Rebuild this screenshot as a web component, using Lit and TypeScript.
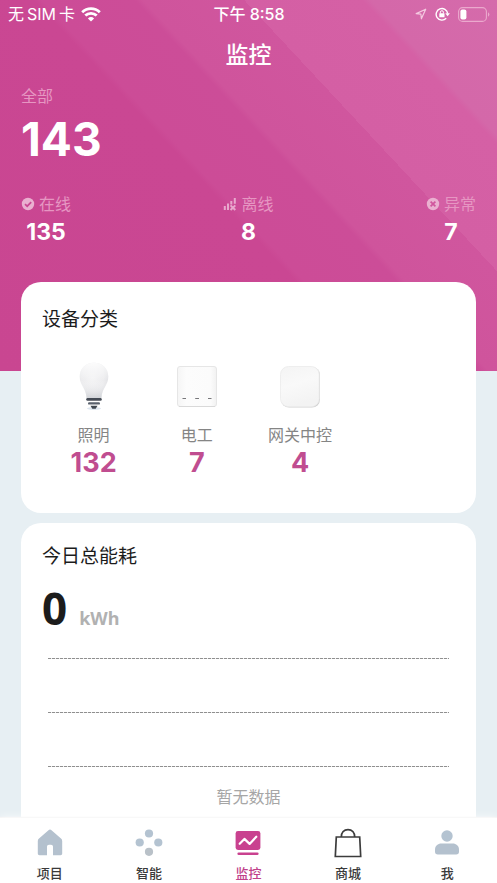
import { LitElement, html, css, svg } from "lit";
import { customElement, state } from "lit/decorators.js";
import { classMap } from "lit/directives/class-map.js";

const wifiIcon = svg`<svg class="wifi" viewBox="0 0 20 15" aria-hidden="true">
  <g fill="none" stroke="#fff" stroke-width="2.8"><path d="M1.2 5.2a12.6 12.6 0 0 1 17.6 0"/><path d="M4.3 8.6a8.2 8.2 0 0 1 11.4 0"/></g>
  <path fill="#fff" d="M10 14.6 6.9 11.4a4.5 4.5 0 0 1 6.2 0z"/></svg>`;
const locationIcon = svg`<svg width="12" height="12" viewBox="0 0 12 12" aria-hidden="true">
  <path d="M10.7 1.2 6.4 10.8 5.9 6.2 1.2 5.6z" fill="none" stroke="#f4c9e0" stroke-width="1.2" stroke-linejoin="round"/></svg>`;
const lockIcon = svg`<svg width="15" height="14" viewBox="0 0 15 14" aria-hidden="true">
  <path d="M11.2 11.3A5.8 5.8 0 1 1 12.7 6.5" fill="none" stroke="#fff" stroke-width="1.4"/>
  <path d="M10.3 6.2h4.6l-2.3 3.1z" fill="#fff"/><rect x="4.3" y="6.2" width="5.2" height="4.1" rx=".6" fill="#fff"/>
  <path d="M5.4 6.4V5.2a1.5 1.5 0 0 1 3 0v1.2" fill="none" stroke="#fff" stroke-width="1"/></svg>`;
const batteryIcon = svg`<svg width="32" height="15" viewBox="0 0 32 15" aria-hidden="true">
  <rect x=".6" y=".6" width="27.8" height="13.8" rx="4" fill="none" stroke="#eba9cd" stroke-width="1.1"/>
  <rect x="2.4" y="2.4" width="6" height="10.2" rx="2" fill="#fff"/><path d="M30 5.2a2.6 2.6 0 0 1 0 4.6z" fill="#eba9cd"/></svg>`;

const onlineIcon = svg`<svg width="14" height="14" viewBox="0 0 14 14" aria-hidden="true">
  <circle cx="7" cy="7" r="6.2" fill="#eab0d0"/><path d="m4 7.1 2.2 2.1 4-4.1" fill="none" stroke="#ca4793" stroke-width="1.7"/></svg>`;
const offlineIcon = svg`<svg width="14" height="14" viewBox="0 0 14 14" aria-hidden="true">
  <path d="M1.800 9v4M5 6.400V13M8.300 4v3.400M11.800 1v5.800" fill="none" stroke="#e8a8cd" stroke-width="2"/>
  <path d="m7.500 8.400 4.800 4.600m0-4.600L7.500 13" fill="none" stroke="#e8a8cd" stroke-width="2"/></svg>`;
const faultIcon = svg`<svg width="14" height="14" viewBox="0 0 14 14" aria-hidden="true">
  <circle cx="7" cy="7" r="6.2" fill="#eab0d0"/><path d="m4.6 4.6 4.8 4.8m0-4.800L4.600 9.400" fill="none" stroke="#d0569d" stroke-width="1.7"/></svg>`;

const bulbIcon = svg`<svg width="48" height="48" viewBox="0 0 48 48" aria-hidden="true">
  <defs>
    <radialGradient id="glass" cx=".45" cy=".45" r=".6"><stop offset="0" stop-color="#f4f4f5"/><stop offset=".65" stop-color="#ececee"/><stop offset="1" stop-color="#dfe0e3"/></radialGradient>
    <linearGradient id="fade" x2="0" y2="1"><stop offset="0" stop-color="#fff" stop-opacity=".85"/><stop offset=".5" stop-color="#fff" stop-opacity="0"/><stop offset="1" stop-color="#c9ccd1" stop-opacity=".6"/></linearGradient>
  </defs>
  <path d="M24 .8c8.300 0 14.300 6 14.300 13.700 0 9.300-6.300 11-6.900 21.500H16.600C16 25.500 9.700 23.800 9.700 14.500 9.700 6.800 15.700.8 24 .8z" fill="url(#glass)"/>
  <path d="M24 .8c8.300 0 14.300 6 14.300 13.700 0 9.300-6.300 11-6.900 21.500H16.600C16 25.500 9.700 23.800 9.700 14.500 9.700 6.800 15.700.8 24 .8z" fill="url(#fade)"/>
  <ellipse cx="24" cy="46.500" rx="7" ry="1.400" fill="#dde6ef"/>
  <rect x="16.200" y="36" width="15.600" height="2.800" rx="1.400" fill="#454b55"/>
  <rect x="18" y="40.200" width="12" height="2.400" rx="1.200" fill="#59616d"/>
  <path d="M20.500 43.800h7l-1.800 3h-3.400z" fill="#3f4751"/></svg>`;
const switchIcon = svg`<svg width="48" height="48" viewBox="0 0 48 48" aria-hidden="true">
  <defs><linearGradient id="panel"><stop offset="0" stop-color="#f5f5f5"/><stop offset=".22" stop-color="#fcfcfc"/><stop offset=".85" stop-color="#fbfbfb"/><stop offset="1" stop-color="#f1f1f1"/></linearGradient></defs>
  <rect x="4.500" y="4.500" width="39" height="40" rx="2.500" fill="url(#panel)" stroke="#e6e6e6"/>
  <path d="M6 44.500h36" stroke="#d9d9d9"/>
  <path d="M9.500 36.500h3.500M22.200 36.500h3.800M35 36.500h3.500" stroke="#77777a" stroke-width="1.200"/></svg>`;
const gatewayIcon = svg`<svg width="48" height="48" viewBox="0 0 48 48" aria-hidden="true">
  <defs><linearGradient id="shell" x2=".3" y2="1"><stop offset="0" stop-color="#f4f4f4"/><stop offset=".5" stop-color="#f9f9f9"/><stop offset="1" stop-color="#f3f3f3"/></linearGradient></defs>
  <rect x="5" y="5" width="39" height="40.600" rx="8" fill="#d2d2d2"/>
  <rect x="4.500" y="4.500" width="38.700" height="40.200" rx="8" fill="url(#shell)" stroke="#ebebeb" stroke-width=".8"/></svg>`;

const homeIcon = svg`<svg width="28" height="28" viewBox="0 0 28 28" aria-hidden="true">
  <path d="M14 1.500c.6 0 1 .3 1.500.7l9.500 8.400c.8.700 1.200 1.400 1.200 2.400v12.500c0 1-.7 1.700-1.700 1.700H17v-8.400c0-1.300-.8-2-2-2h-2c-1.200 0-2 .7-2 2v8.400H3.500c-1 0-1.700-.7-1.700-1.700V13c0-1 .4-1.700 1.200-2.400l9.500-8.400c.5-.4.900-.7 1.500-.7z" fill="#b4c1ce"/></svg>`;
const smartIcon = svg`<svg width="28" height="28" viewBox="0 0 28 28" aria-hidden="true">
  <g fill="#b4c3d1"><circle cx="14" cy="5.500" r="4.100"/><circle cx="4.700" cy="14.500" r="4.100"/><circle cx="23.300" cy="14.500" r="4.100"/></g><circle cx="14" cy="23.800" r="4.100" fill="#b9c1c8"/></svg>`;
const monitorIcon = svg`<svg width="28" height="28" viewBox="0 0 28 28" aria-hidden="true">
  <rect x="1.600" y="3" width="24.800" height="19" rx="2.400" fill="#c9418f"/><rect x="3.400" y="24.400" width="21.200" height="2.600" rx="1.300" fill="#c9418f"/>
  <path d="m5.700 15.800 4.700-4.900 5.200 5 6.700-7.200" fill="none" stroke="#fff" stroke-width="2.200" stroke-linecap="round" stroke-linejoin="round"/></svg>`;
const shopIcon = svg`<svg width="28" height="30" viewBox="0 0 28 30" aria-hidden="true">
  <path d="M2.300 9h23.400l1 19.500H1.300z" fill="none" stroke="#3c3c3c" stroke-width="1.700"/>
  <path d="M7.300 9c0-4.300 2.700-7.400 6.700-7.400s6.700 3.100 6.700 7.400" fill="none" stroke="#3c3c3c" stroke-width="1.700"/></svg>`;
const meIcon = svg`<svg width="28" height="28" viewBox="0 0 28 28" aria-hidden="true">
  <circle cx="14" cy="8" r="5.700" fill="#b4c3d1"/><path d="M2 21.500c0-3.600 2.800-6 6.400-6h11.200c3.600 0 6.400 2.400 6.400 6v2.200c0 1.800-1 2.800-2.800 2.800H4.800C3 26.500 2 25.500 2 23.700z" fill="#b4c1ce"/></svg>`;

const stats = [
  { icon: onlineIcon, label: "在线", value: 135 },
  { icon: offlineIcon, label: "离线", value: 8 },
  { icon: faultIcon, label: "异常", value: 7 },
];
const categories = [
  { icon: bulbIcon, label: "照明", value: 132 },
  { icon: switchIcon, label: "电工", value: 7 },
  { icon: gatewayIcon, label: "网关中控", value: 4 },
];
const tabs = [
  { icon: homeIcon, label: "项目" },
  { icon: smartIcon, label: "智能" },
  { icon: monitorIcon, label: "监控" },
  { icon: shopIcon, label: "商城" },
  { icon: meIcon, label: "我" },
];

@customElement("app-root")
export class AppRoot extends LitElement {
  @state() private active = "监控";

  static styles = css`
    :host {
      display: flex;
      flex-direction: column;
      height: 100vh;
      background: #e7eff3;
      color: #1c1c1c;
      font-family: Inter, "Noto Sans CJK SC", sans-serif;
      font-size: 16px;
      line-height: 20px;
    }
    * { box-sizing: border-box; }
    h1, h2, p, dl, dd { margin: 0; padding: 0; }
    svg { display: block; flex: none; }
    .scroll { flex: 1; min-height: 0; overflow-y: auto; scrollbar-width: none; }
    .hero {
      padding: 0 21px 125px;
      color: #fff;
      background: linear-gradient(47deg,
        #c94691 0, #ca4793 45%, #cc4c97 46%, #cc4d98 57%,
        #cf549c 58%, #d0569e 70%, #d45fa4 70%, #d560a5 84%, #d468a9 85%, #d56bab 100%);
    }
    .status {
      display: grid;
      grid-template-columns: 1fr auto 1fr;
      align-items: center;
      height: 28px;
      margin: 0 -14px 0 -13px;
    }
    .carrier { display: flex; align-items: center; gap: 6px; }
    .words { display: flex; gap: 3px; }
    .wifi { width: 20px; height: 15px; }
    .clock { font-weight: 500; }
    .indicators { display: flex; align-items: center; justify-content: flex-end; gap: 8px; }
    h1 { margin-top: 11px; text-align: center; font-size: 23px; line-height: 32px; font-weight: 500; }
    .soft { color: #e696c2; }
    .total-label { margin-top: 15px; }
    .total { margin-top: 9px; font-size: 46px; line-height: 48px; font-weight: 700; }
    .stats { display: flex; justify-content: space-between; margin-top: 31px; }
    .stat { display: flex; flex-direction: column; align-items: center; gap: 4px; }
    .stat dt { display: flex; align-items: center; gap: 4px; }
    .stat dd { font-size: 23px; line-height: 28px; font-weight: 700; }
    .cards { display: flex; flex-direction: column; gap: 10px; margin-top: -89px; padding: 0 21px; }
    .card { background: #fff; border-radius: 20px; padding: 26px 21px 36px; }
    .energy { padding-top: 22px; }
    h2 { font-size: 19px; line-height: 24px; font-weight: 400; }
    .categories { display: grid; grid-template-columns: repeat(4, 1fr); margin-top: 30px; }
    .category { display: flex; flex-direction: column; align-items: center; }
    .category dt { display: flex; flex-direction: column; align-items: center; gap: 15px; color: #858585; }
    .category dd { margin-top: 4px; font-size: 27px; line-height: 28px; font-weight: 700; color: #c04d90; }
    .usage { display: flex; align-items: baseline; gap: 12px; margin-top: 15px; font-family: "Noto Sans", sans-serif; font-weight: 700; }
    .usage-value { font-size: 44px; line-height: 48px; }
    .usage-unit { font-size: 18px; color: #b1b1b1; }
    .chart { display: flex; flex-direction: column; gap: 53px; margin: 26px 6px 0; }
    .gridline { height: 1px; background: repeating-linear-gradient(90deg, #8f8f8f 0 3px, #f0f0f0 3px 4px); }
    .empty { margin-top: 20px; text-align: center; color: #a6a6a6; }
    .tabs {
      display: grid;
      grid-template-columns: repeat(5, 1fr);
      height: 65px;
      background: #fff;
      box-shadow: 0 -1px 8px rgba(255, 255, 255, 0.7), 0 -1px 1px #f4f4f4;
      position: relative;
    }
    .tab {
      display: flex;
      flex-direction: column;
      align-items: center;
      justify-content: space-between;
      padding: 10px 0 2px;
      color: #3a3a3a;
      font-size: 13px;
      line-height: 16px;
      font-weight: 500;
      text-decoration: none;
    }
    .tab.on { color: #c0408a; }
  `;

  render() {
    return html`
      <div class="scroll">
        <header class="hero">
          <div class="status">
            <span class="carrier"><span class="words"><span>无</span><span>SIM</span><span>卡</span></span>${wifiIcon}</span>
            <span class="clock">下午 8:58</span>
            <span class="indicators">${locationIcon}${lockIcon}${batteryIcon}</span>
          </div>
          <h1>监控</h1>
          <p class="soft total-label">全部</p>
          <p class="total">143</p>
          <dl class="stats">
            ${stats.map((s) => html`<div class="stat"><dt class="soft">${s.icon}${s.label}</dt><dd>${s.value}</dd></div>`)}
          </dl>
        </header>
        <main class="cards">
          <section class="card">
            <h2>设备分类</h2>
            <dl class="categories">
              ${categories.map((c) => html`<div class="category"><dt>${c.icon}${c.label}</dt><dd>${c.value}</dd></div>`)}
            </dl>
          </section>
          <section class="card energy">
            <h2>今日总能耗</h2>
            <p class="usage"><span class="usage-value">0</span><span class="usage-unit">kWh</span></p>
            <div class="chart">
              <div class="gridline"></div><div class="gridline"></div><div class="gridline"></div>
            </div>
            <p class="empty">暂无数据</p>
          </section>
        </main>
      </div>
      <nav class="tabs">
        ${tabs.map((t) => html`<a href="#${t.label}" class=${classMap({ tab: true, on: t.label === this.active })}
          @click=${() => (this.active = t.label)}>${t.icon}${t.label}</a>`)}
      </nav>
    `;
  }
}
